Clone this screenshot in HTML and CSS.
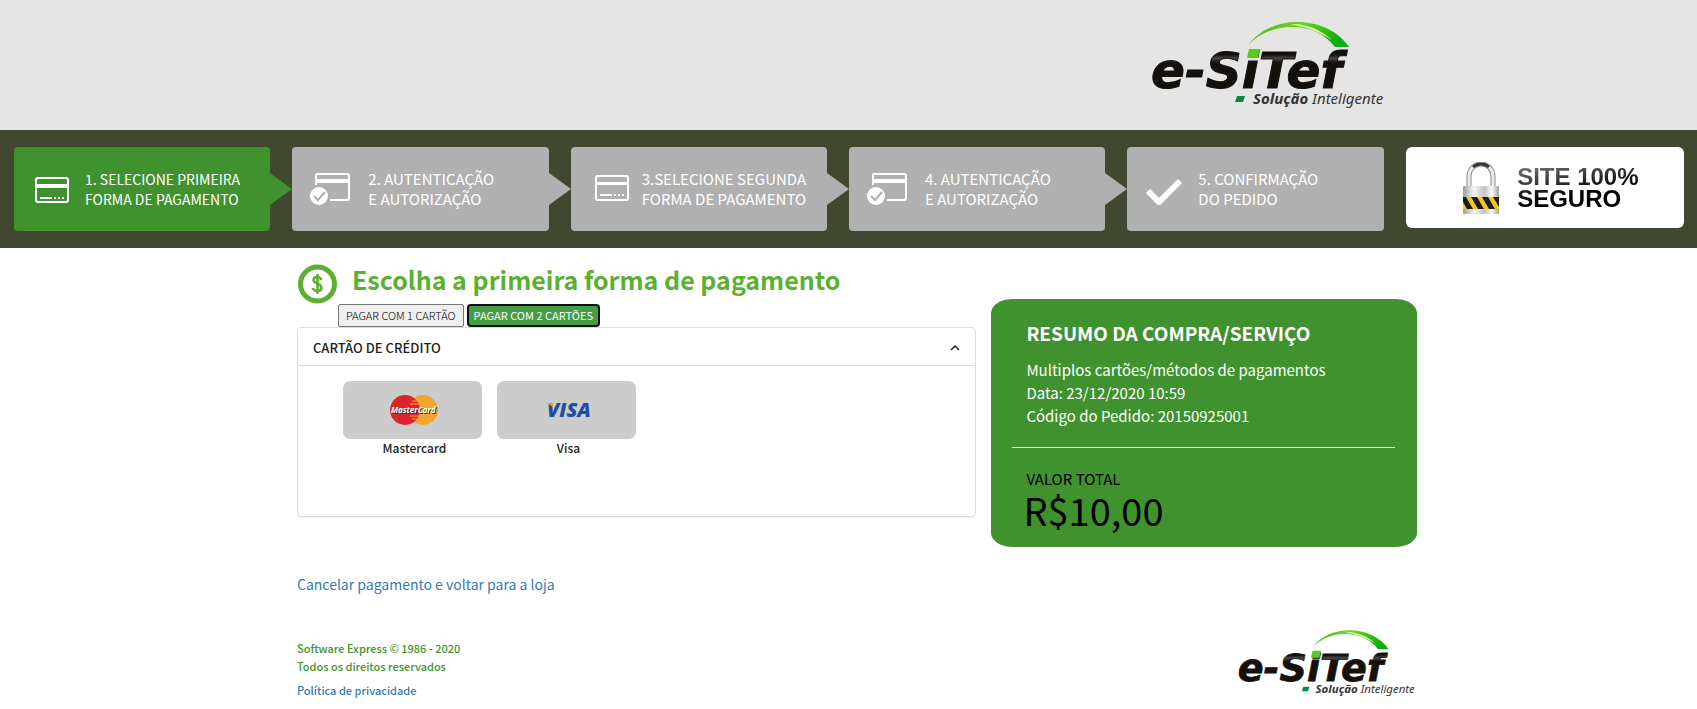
FILE: index.html
```html
<!DOCTYPE html>
<html lang="pt-BR">
<head>
  <meta charset="UTF-8" />
  <meta name="viewport" content="width=device-width, initial-scale=1.0" />
  <title>e-SiTef - Pagamento</title>
  <link rel="stylesheet" href="styles.css">
</head>
<body>

  <header class="topo">
    <svg class="logo" viewBox="20 8 236 94" role="img" aria-label="e-SiTef Solução Inteligente">
      <defs>
        <linearGradient id="arco" x1="0" y1="0" x2="1" y2="0.4">
          <stop offset="0" stop-color="#3fa61c" />
          <stop offset="0.45" stop-color="#6fd41e" />
          <stop offset="1" stop-color="#0fae10" />
        </linearGradient>
        <linearGradient id="letra" x1="0" y1="0" x2="0" y2="1">
          <stop offset="0.22" stop-color="#14100c" />
          <stop offset="0.28" stop-color="#4a4643" />
          <stop offset="0.36" stop-color="#14100c" />
        </linearGradient>
        <g id="logo-esitef">
          <path d="M118 35C130 20 147 12 167 12C189 12 208 21 219 37H205C195 24 181 18 165 17C146 16 130 23 118 35Z" fill="url(#arco)" />
          <path d="M160 14C176 13 192 20 202 30C188 21 174 17 160 14Z" fill="#d8f7a0" />
          <text class="logo-nome" x="21" y="78" fill="url(#letra)">e-SiTef</text>
          <path d="M119 39H130L128 48H117Z" fill="#5cc81c" />
          <path d="M107 86H115L113 92H105Z" fill="#0b8a43" />
          <text class="logo-lema" x="123" y="94"><tspan class="forte">Solução</tspan> Inteligente</text>
        </g>
      </defs>
      <use href="#logo-esitef" />
    </svg>
  </header>

  <nav class="etapas">
    <div class="etapa ativa">
      <svg class="icone" viewBox="0 0 40 32">
        <rect x="4" y="5" width="32" height="24" rx="2" fill="none" stroke="#fff" stroke-width="2" />
        <path d="M4 11H36V15H4Z" fill="#fff" />
        <path d="M8 25H20M22 25H24M26 25H28M30 25H32" stroke="#fff" stroke-width="2" />
      </svg>
      <p>1. SELECIONE PRIMEIRA<br>FORMA DE PAGAMENTO</p>
    </div>
    <div class="etapa autenticacao">
      <svg class="icone" viewBox="0 0 40 32">
        <path d="M6 12V2Q6 1 7 1H37Q39 1 39 3V25Q39 27 37 27H20" fill="none" stroke="#fff" stroke-width="2" />
        <path d="M6 6H39V10H6Z" fill="#fff" />
        <circle cx="9" cy="23" r="9" fill="#fff" />
        <path d="M4 23L8 27L15 19" fill="none" stroke="#b0b0b0" stroke-width="2" />
      </svg>
      <p>2. AUTENTICAÇÃO<br>E AUTORIZAÇÃO</p>
    </div>
    <div class="etapa">
      <svg class="icone" viewBox="0 0 40 32">
        <rect x="7" y="3" width="32" height="24" rx="1" fill="none" stroke="#fff" stroke-width="2" />
        <path d="M7 9H39V12H7Z" fill="#fff" />
        <path d="M11 22H23M25 22H27M29 22H31M33 22H35" stroke="#fff" stroke-width="2" />
      </svg>
      <p>3.SELECIONE SEGUNDA<br>FORMA DE PAGAMENTO</p>
    </div>
    <div class="etapa autenticacao">
      <svg class="icone" viewBox="0 0 40 32">
        <path d="M6 12V2Q6 1 7 1H37Q39 1 39 3V25Q39 27 37 27H20" fill="none" stroke="#fff" stroke-width="2" />
        <path d="M6 6H39V10H6Z" fill="#fff" />
        <circle cx="9" cy="23" r="9" fill="#fff" />
        <path d="M4 23L8 27L15 19" fill="none" stroke="#b0b0b0" stroke-width="2" />
      </svg>
      <p>4. AUTENTICAÇÃO<br>E AUTORIZAÇÃO</p>
    </div>
    <div class="etapa final">
      <svg class="icone" viewBox="0 0 40 32">
        <path d="M3 18L14 29L35 8" fill="none" stroke="#fff" stroke-width="6" />
      </svg>
      <p>5. CONFIRMAÇÃO<br>DO PEDIDO</p>
    </div>
    <div class="selo">
      <svg class="cadeado" viewBox="0 0 36 52">
        <defs>
          <linearGradient id="metal" x1="0" y1="0" x2="1" y2="0">
            <stop offset="0" stop-color="#9a9a9a" />
            <stop offset="0.3" stop-color="#f4f4f4" />
            <stop offset="0.6" stop-color="#c4c4c4" />
            <stop offset="0.8" stop-color="#fafafa" />
            <stop offset="1" stop-color="#a0a0a0" />
          </linearGradient>
        </defs>
        <path d="M6 26V14A12 12 0 0 1 30 14V26" fill="none" stroke="#8d8d8d" stroke-width="5" />
        <path d="M6 26V14A12 12 0 0 1 30 14V26" fill="none" stroke="#ececec" stroke-width="3" />
        <path d="M10 5A12 12 0 0 1 26 5" fill="none" stroke="#333" stroke-width="3" />
        <rect x="0" y="24" width="36" height="28" rx="1" fill="url(#metal)" />
        <rect x="0" y="35" width="36" height="12" fill="#f2c81c" />
        <path d="M0 35H3L10 47H4L0 40ZM8 35H14L21 47H15ZM19 35H25L32 47H26ZM30 35H36V45Z" fill="#1c1c1c" />
      </svg>
      <p>SITE 100%<br>SEGURO</p>
    </div>
  </nav>

  <main class="conteudo">
    <section class="pagamento">
      <div class="titulo">
        <svg class="moeda" viewBox="0 0 40 40">
          <circle cx="20" cy="20" r="17" fill="none" stroke="#5bb030" stroke-width="5" />
          <path d="M24 16C23 14 22 13 20 13C17 13 16 14 16 16C16 20 24 19 24 24C24 26 23 27 20 27C17 27 16 26 15 24M20 10V30" fill="none" stroke="#5bb030" stroke-width="2.5" />
        </svg>
        <h1>Escolha a primeira forma de pagamento</h1>
      </div>

      <div class="opcoes">
        <button type="button" class="opcao">PAGAR COM 1 CARTÃO</button>
        <button type="button" class="opcao selecionada">PAGAR COM 2 CARTÕES</button>
      </div>

      <div class="painel">
        <button type="button" class="painel-topo" aria-expanded="true" aria-controls="cartoes">
          CARTÃO DE CRÉDITO
          <svg class="seta" viewBox="0 0 10 6"><path d="M1 5L5 1L9 5" fill="none" stroke="#222" stroke-width="1.5" /></svg>
        </button>
        <div class="cartoes" id="cartoes">
          <button type="button" class="cartao">
            <span class="bandeira">
              <svg class="mastercard" viewBox="0 0 50 30">
                <circle cx="34" cy="15" r="15" fill="#f3a62f" />
                <circle cx="16" cy="15" r="15" fill="#dc2529" />
                <path d="M23 6H29M21 9H30M21 21H30M23 24H29" stroke="#f3a62f" stroke-width="1" />
                <text class="mc-nome" x="2" y="18">MasterCard</text>
              </svg>
            </span>
            <span class="nome">Mastercard</span>
          </button>
          <button type="button" class="cartao">
            <span class="bandeira">
              <svg class="visa" viewBox="0 0 50 30">
                <text class="visa-nome" x="4" y="22">VISA</text>
                <path d="M2 8H7Q10 8 10 10L11 14Q8 9 2 8Z" fill="#f3a62f" />
              </svg>
            </span>
            <span class="nome">Visa</span>
          </button>
        </div>
      </div>

      <a class="cancelar" href="#">Cancelar pagamento e voltar para a loja</a>
    </section>

    <aside class="resumo">
      <h2>RESUMO DA COMPRA/SERVIÇO</h2>
      <p>Multiplos cartões/métodos de pagamentos<br>Data: 23/12/2020 10:59<br>Código do Pedido: 20150925001</p>
      <hr>
      <div class="total">VALOR TOTAL</div>
      <div class="valor">R$10,00</div>
    </aside>
  </main>

  <footer class="rodape">
    <div class="direitos">
      <p>Software Express © 1986 - 2020<br>Todos os direitos reservados</p>
      <a href="#">Política de privacidade</a>
    </div>
    <svg class="logo-rodape" viewBox="20 8 236 94" role="img" aria-label="e-SiTef Solução Inteligente">
      <use href="#logo-esitef" />
    </svg>
  </footer>

</body>
</html>
```
FILE: styles.css
```css
* {
  box-sizing: border-box;
}
body {
  margin: 0;
  font-family: "Noto Sans CJK SC", "Open Sans", sans-serif;
  font-size: 15px;
  color: #222;
  background-color: #fff;
}
h1, h2, p {
  margin: 0;
}
a {
  color: #337ab7;
  text-decoration: none;
}
button {
  font-family: inherit;
  cursor: pointer;
}
.topo {
  display: flex;
  justify-content: flex-end;
  padding: 18px 18.3% 18px 0;
  background-color: #e5e5e5;
}
.logo {
  width: 236px;
  height: 94px;
}
.logo-nome {
  font: italic bold 50px "DejaVu Sans", sans-serif;
  stroke: #14100c;
  stroke-width: 1;
}
.logo-lema {
  font: italic 15px "Noto Sans", sans-serif;
  fill: #333;
}
.logo-lema .forte {
  font-weight: bold;
}

/* etapas */
.etapas {
  display: grid;
  grid-template-columns: repeat(6, 1fr);
  align-items: start;
  padding: 17px 13px 17px 14px;
  background-color: #404830;
}
.etapa {
  position: relative;
  display: flex;
  align-items: center;
  gap: 13px;
  height: 84px;
  margin-right: 22px;
  padding-left: 18px;
  border-radius: 4px;
  background-color: #b0b0b0;
  color: #fff;
  font-size: 15px;
  line-height: 20px;
}
.etapa.autenticacao {
  gap: 18px;
}
.etapa::after {
  content: "";
  position: absolute;
  left: 100%;
  top: 26px;
  border: 16px solid transparent;
  border-left: 22px solid #b0b0b0;
  border-right: 0;
}
.etapa.final::after {
  display: none;
}
.etapa.ativa {
  background-color: #3f922e;
  font-size: 14px;
}
.etapa.ativa::after {
  border-left-color: #3f922e;
}
.icone {
  flex: none;
  width: 40px;
  height: 32px;
}
.selo {
  display: flex;
  align-items: center;
  justify-content: center;
  gap: 18px;
  height: 81px;
  padding-left: 12px;
  border-radius: 6px;
  background-color: #fff;
  font: bold 24px/22px "Liberation Sans", Arial, sans-serif;
}
.selo p {
  background: linear-gradient(170deg, #777, #000 60%);
  background-clip: text;
  -webkit-background-clip: text;
  color: transparent;
}
.cadeado {
  width: 36px;
  height: 52px;
}

/* conteúdo */
.conteudo {
  display: flex;
  align-items: flex-start;
  gap: 15px;
  margin: 0 16.5% 0 17.5%;
}
.pagamento {
  flex: 1;
  padding-top: 16px;
}
.titulo {
  display: flex;
  gap: 14px;
  height: 40px;
}
.moeda {
  width: 41px;
  height: 40px;
}
h1 {
  font-size: 25px;
  line-height: 30px;
  font-weight: bold;
  color: #5bb030;
}
.opcoes {
  display: flex;
  gap: 3px;
  padding-left: 41px;
}
.opcao {
  height: 23px;
  padding: 0 7px 1px;
  border: 1px solid #767676;
  border-radius: 2px;
  background-color: #efefef;
  color: #000;
  font-size: 11px;
  line-height: 18px;
  font-weight: 300;
}
.opcao.selecionada {
  padding: 0 5px 1px;
  border: 2px solid #101010;
  border-radius: 4px;
  background-color: #449d44;
  color: #fff;
  font-weight: 400;
}
.painel {
  height: 190px;
  border: 1px solid #ddd;
  border-radius: 4px;
  box-shadow: 0 1px 1px rgba(0, 0, 0, 0.05);
}
.painel-topo {
  display: flex;
  align-items: center;
  justify-content: space-between;
  width: 100%;
  height: 38px;
  padding: 2px 15px 0;
  border: 0;
  border-bottom: 1px solid #ddd;
  background: none;
  color: #222;
  font-size: 13px;
  font-weight: 500;
}
.seta {
  width: 10px;
  height: 6px;
}
.cartoes {
  display: flex;
  gap: 15px;
  padding: 15px 45px;
}
.cartao {
  width: 139px;
  padding: 0;
  border: 0;
  background: none;
  color: #222;
  font-size: 12px;
  line-height: 17px;
  font-weight: 500;
}
.nome {
  padding-left: 4px;
}
.bandeira {
  display: flex;
  align-items: center;
  justify-content: center;
  height: 58px;
  padding-left: 4px;
  border-radius: 7px;
  background-color: #ccc;
}
.mastercard, .visa {
  width: 50px;
  height: 30px;
}
.mc-nome {
  font: italic bold 8px "Open Sans", sans-serif;
  fill: #fff;
  text-shadow: 1px 1px 0 #333;
}
.visa-nome {
  font: italic 800 20px "Open Sans", sans-serif;
  fill: #1c4fa1;
}
.cancelar {
  display: inline-block;
  margin-top: 56px;
  font-size: 14px;
  line-height: 22px;
}

/* resumo */
.resumo {
  width: 38%;
  margin-top: 51px;
  padding: 21px 22px 16px 21px;
  border-radius: 22px / 14px;
  background-color: #3f922e;
  color: #fff;
}
.resumo h2 {
  padding-left: 14px;
  font-size: 19px;
  line-height: 26px;
  font-weight: bold;
}
.resumo p {
  padding: 12px 14px 0;
  line-height: 23px;
}
.resumo hr {
  margin: 20px 0 21px;
  border: 0;
  border-top: 1px solid #fff;
}
.total {
  padding-left: 14px;
  line-height: 20px;
  color: #000;
}
.valor {
  padding-left: 11px;
  font-size: 38px;
  line-height: 42px;
  color: #000;
}

/* rodapé */
.rodape {
  display: flex;
  justify-content: space-between;
  align-items: flex-start;
  margin: 32px 16.5% 0 17.5%;
}
.direitos {
  padding-top: 12px;
  font-size: 11px;
  line-height: 18px;
  font-weight: 500;
  color: #3f922e;
}
.direitos a {
  display: inline-block;
  margin-top: 6px;
}
.logo-rodape {
  width: 180px;
  height: 72px;
}
```
